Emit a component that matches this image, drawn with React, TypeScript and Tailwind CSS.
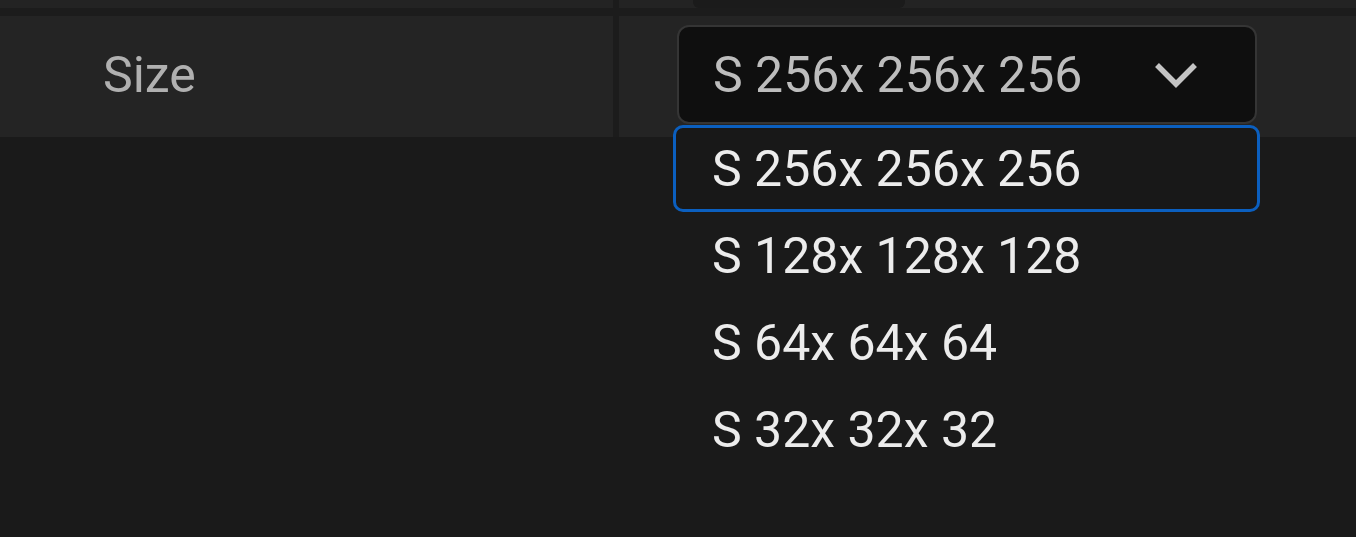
const options = ["S 256x 256x 256", "S 128x 128x 128", "S 64x 64x 64", "S 32x 32x 32"];

function Chevron() {
  return (
    <svg width="46" height="28" viewBox="0 0 46 28" fill="none" className="text-[#c4c4c4]">
      <polyline points="4,4 23,23 42,4" stroke="currentColor" strokeWidth="5.5" strokeLinejoin="miter" />
    </svg>
  );
}

export default function App() {
  const selected = 0;

  return (
    <div
      className="relative w-[1356px] h-[537px] overflow-hidden bg-[#1a1a1a]"
      style={{ fontFamily: "Roboto, 'Liberation Sans', sans-serif" }}
    >
      {/* strip left over from the row above */}
      <div className="flex h-[8px] bg-[#232323]">
        <div className="w-[613px]" />
        <div className="w-[6px] bg-[#1c1c1c]" />
        <div className="ml-[74px] w-[212px] h-full rounded-b-[6px] bg-[#1b1b1b]" />
      </div>
      <div className="h-[8px] bg-[#1c1c1c]" />

      {/* property row */}
      <div className="flex h-[121px] bg-[#242424]">
        <div className="flex w-[613px] items-center pl-[103px] pb-[4px]">
          <span className="text-[50px] leading-none text-[#b0b0b0]">Size</span>
        </div>
        <div className="w-[6px] bg-[#1c1c1c]" />
        <div className="flex-1 pt-[9px] pl-[58px]">
          <button className="flex h-[99px] w-[580px] items-center justify-between rounded-[12px] border-2 border-[#353535] bg-[#0f0f0f] pl-[34px] pr-[56px]">
            <span className="text-[50px] leading-none text-[#bdbdbd]">{options[selected]}</span>
            <Chevron />
          </button>
        </div>
      </div>

      {/* open dropdown list */}
      <div className="absolute left-[673px] top-[125px] flex w-[587px] flex-col">
        {options.map((opt, i) => (
          <div
            key={opt}
            className={
              "flex h-[87px] items-center rounded-[10px] pl-[36px] " +
              (i === selected ? "border-[3px] border-[#0b5fbf] bg-[#181818]" : "border-[3px] border-transparent")
            }
          >
            <span className="text-[50px] leading-none text-[#ececec]">{opt}</span>
          </div>
        ))}
      </div>
    </div>
  );
}
